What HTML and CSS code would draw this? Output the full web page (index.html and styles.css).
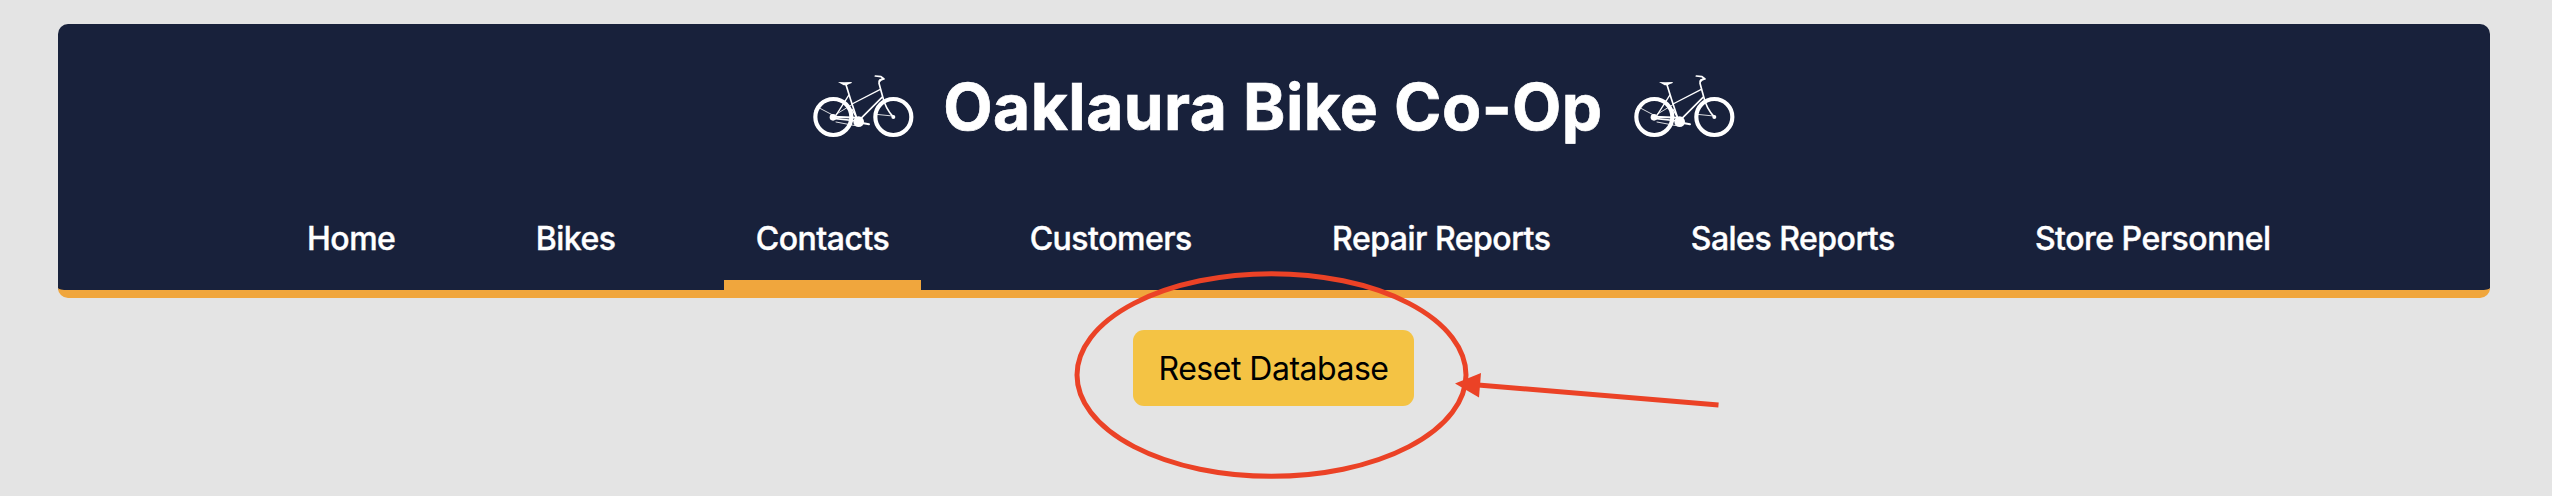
FILE: index.html
```
<!DOCTYPE html>
<html lang="en">
<head>
<meta charset="utf-8">
<title>Oaklaura Bike Co-Op</title>
<link rel="stylesheet" href="styles.css">
</head>
<body>
<svg width="0" height="0" class="defs">
  <symbol id="bike" viewBox="30 30 318 210">
    <g fill="none" stroke="#fff" stroke-linecap="round" stroke-linejoin="round">
      <circle cx="100" cy="171" r="54" stroke-width="12.5"/>
      <circle cx="280" cy="171" r="54" stroke-width="12.5"/>
      <path d="M138 74L152 119L172 180" stroke-width="5"/>
      <path d="M146 106L108 166" stroke-width="4"/>
      <path d="M156 132L241 88" stroke-width="4"/>
      <path d="M180 178L246 112" stroke-width="5"/>
      <path d="M238 62L237 70L248 110Q256 145 279 170" stroke-width="5"/>
      <path d="M239 64Q240 59 246 58" stroke-width="6"/>
      <path d="M226 48L243 50L252 57L240 60" stroke-width="5"/>
      <path d="M100 170L172 173" stroke-width="6"/>
      <path d="M100 175L172 183" stroke-width="5"/>
      <path d="M108 186L166 197M44 151L58 144L98 165M228 163L278 168M108 163L156 134" stroke-width="2.5"/>
      <path d="M182 188L207 193" stroke-width="6"/>
      <path d="M156 148L168 170" stroke-width="4"/>
    </g>
    <path d="M114 66Q130 67 156 66Q156 71 147 72L140 76L131 76Z" fill="#fff"/>
    <circle cx="176" cy="185" r="16" fill="#fff"/>
    <circle cx="99" cy="172" r="10" fill="#fff"/>
    <circle cx="280" cy="171" r="6" fill="#fff"/>
  </symbol>
</svg>
<header class="header">
  <div class="brand">
    <svg class="bike"><use href="#bike"/></svg>
    <h1 class="title">Oaklaura Bike Co-Op</h1>
    <svg class="bike"><use href="#bike"/></svg>
  </div>
  <nav class="nav">
    <a class="link">Home</a>
    <a class="link">Bikes</a>
    <a class="link active">Contacts</a>
    <a class="link">Customers</a>
    <a class="link">Repair Reports</a>
    <a class="link">Sales Reports</a>
    <a class="link">Store Personnel</a>
  </nav>
</header>
<main class="main"><button class="reset">Reset Database</button></main>
<svg class="annotation" viewBox="0 0 2552 496">
  <ellipse cx="1271.5" cy="375" rx="194.5" ry="101.3" fill="none" stroke="#eb4226" stroke-width="5"/>
  <path d="M1718.5 405L1478 385" stroke="#eb4226" stroke-width="5"/>
  <path d="M1455 383.5L1481 373L1479 397.5Z" fill="#eb4226"/>
</svg>
</body>
</html>
```
FILE: styles.css
```
body {
  margin: 0;
  height: 496px;
  overflow: hidden;
  box-sizing: border-box;
  padding: 24px 62px 0 58px;
  background: #e4e4e4;
  font-family: Inter, "Liberation Sans", sans-serif;
}
.defs, .annotation { position: absolute; top: 0; left: 0; }
.annotation { width: 2552px; height: 496px; pointer-events: none; }
.header {
  height: 274px;
  box-sizing: border-box;
  border-bottom: 8px solid #f0a63d;
  border-radius: 10px;
  background: #18213b;
  color: #fff;
  display: flex;
  flex-direction: column;
}
.brand {
  display: flex;
  justify-content: center;
  padding: 46px 2px 0 0;
  height: 110px;
}
.bike { width: 106px; height: 70px; flex: none; }
.title {
  width: 715px;
  margin: -1px 0 0;
  text-align: center;
  white-space: nowrap;
  font-size: 64px;
  line-height: 76px;
  font-weight: 700;
  letter-spacing: 0.48px;
  -webkit-text-stroke: 0.7px #fff;
}
.nav { display: flex; padding-left: 217px; gap: 76.3px; }
.link {
  height: 110px;
  padding: 0 32px;
  box-sizing: border-box;
  border-bottom: 10px solid transparent;
  font-size: 32px;
  line-height: 117px;
  font-weight: 500;
  letter-spacing: -0.5px;
  -webkit-text-stroke: 0.4px #fff;
  white-space: nowrap;
}
.active { border-bottom-color: #f0a63d; }
.main { display: flex; justify-content: center; padding: 32px 1px 0 0; }
.reset {
  width: 281px;
  height: 76px;
  padding: 0;
  border: 0;
  border-radius: 11px;
  background: #f4c344;
  color: #000;
  font: 400 32px Inter, "Liberation Sans", sans-serif;
  letter-spacing: -0.5px;
  white-space: nowrap;
}
```
